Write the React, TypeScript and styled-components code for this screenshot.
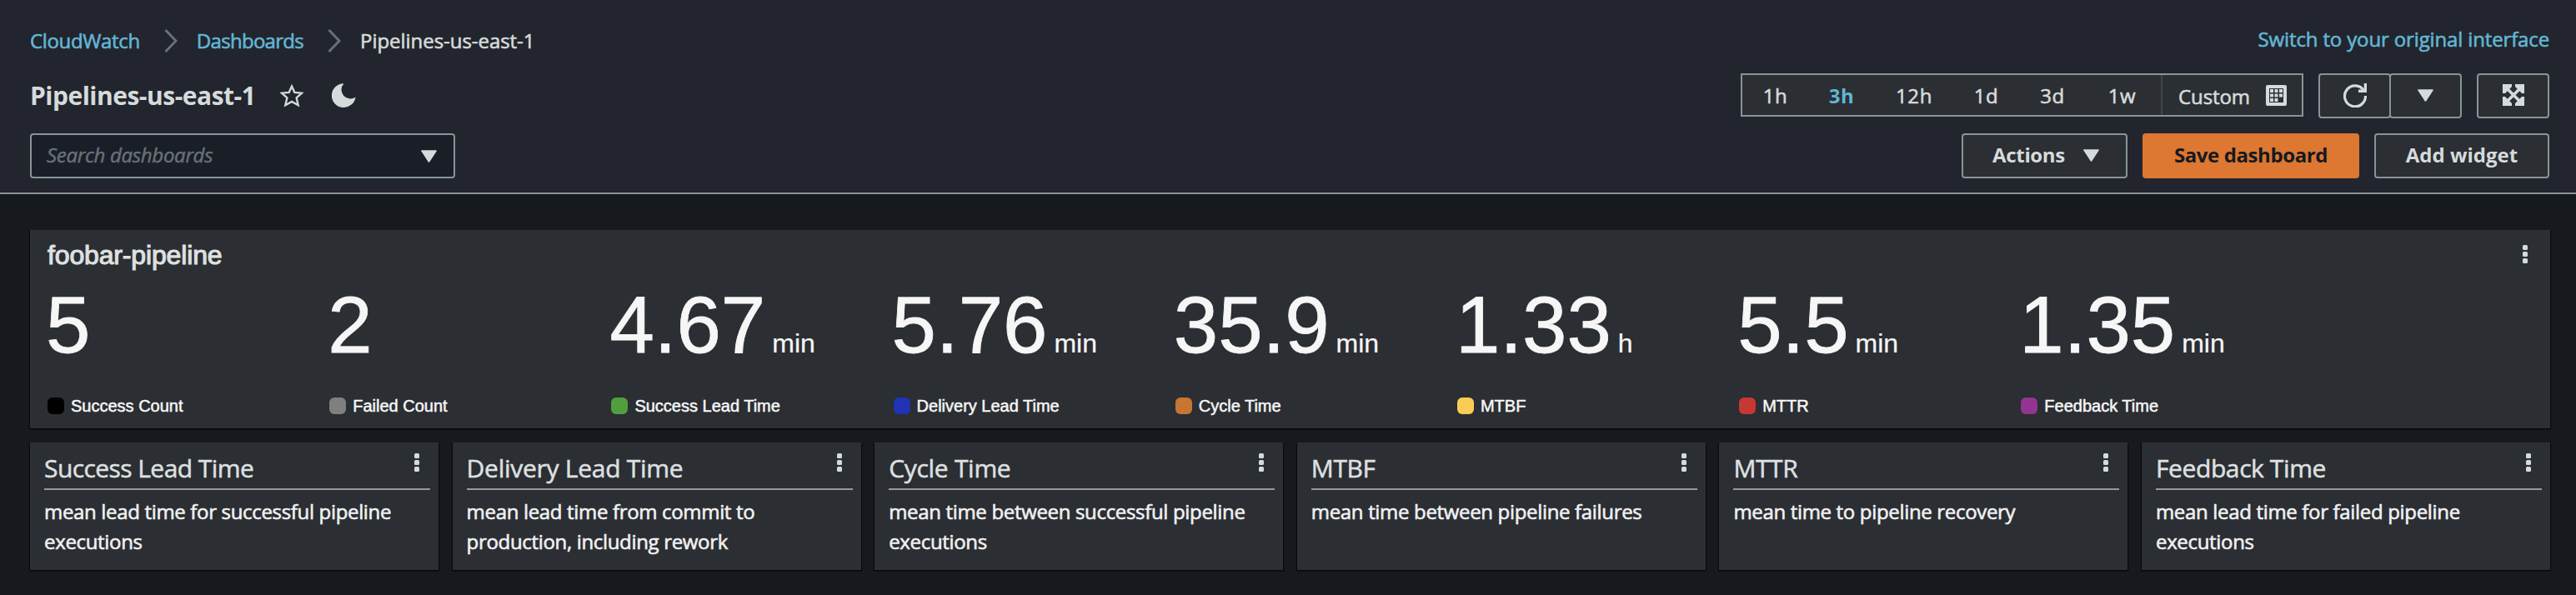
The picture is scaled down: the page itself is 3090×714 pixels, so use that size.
import React from 'react';
import styled, { createGlobalStyle } from 'styled-components';

const sans = `'Open Sans', 'Noto Sans', sans-serif`;
const helvetica = `'Liberation Sans', Arial, sans-serif`;

const color = {
  page: '#16191e',
  header: '#22252d',
  panel: '#2b2e33',
  field: '#1a1e27',
  border: '#879596',
  text: '#d5dbdb',
  link: '#62b5d5',
  muted: '#687078',
  accent: '#dd7731',
};

const GlobalStyle = createGlobalStyle`
  *, *::before, *::after { box-sizing: border-box; }
  body {
    margin: 0;
    background: ${color.page};
    color: ${color.text};
    font-family: ${sans};
    font-size: 24px;
  }
  h1, h2, p { margin: 0; }
  button { font: inherit; color: inherit; margin: 0; padding: 0; }
  svg { display: block; flex: none; }
`;

const Page = styled.div`
  min-height: 714px;
  background: ${color.page};
`;

const Header = styled.header`
  display: flex;
  justify-content: space-between;
  height: 233px;
  padding: 0 32px 0 36px;
  background: ${color.header};
  border-bottom: 2px solid ${color.border};
`;

const HeaderLeft = styled.div`
  padding-top: 31px;
`;

const HeaderRight = styled.div`
  display: flex;
  flex-direction: column;
  align-items: flex-end;
  padding-top: 29px;
`;

const Breadcrumbs = styled.nav`
  display: flex;
  align-items: center;
  height: 36px;
  line-height: 36px;
  white-space: nowrap;
  -webkit-text-stroke-width: 0.6px;
`;

const Crumb = styled.span<{ $link?: boolean; $spacing: number }>`
  color: ${(p) => (p.$link ? color.link : color.text)};
  letter-spacing: ${(p) => p.$spacing}px;
`;

const CrumbSeparator = styled.svg`
  margin: 0 23px 0 29px;
`;

const TitleRow = styled.div`
  display: flex;
  align-items: flex-start;
  height: 40px;
  margin-top: 28px;
`;

const Title = styled.h1`
  font-size: 30px;
  line-height: 40px;
  font-weight: 700;
  letter-spacing: -0.5px;
  width: 300px;
  white-space: nowrap;
`;

const IconSlot = styled.span<{ $width: number }>`
  width: ${(p) => p.$width}px;
  padding-top: 5px;
`;

const SearchBox = styled.div`
  display: flex;
  align-items: center;
  justify-content: space-between;
  width: 510px;
  height: 54px;
  margin-top: 25px;
  padding: 0 20px 0 18px;
  background: ${color.field};
  border: 2px solid ${color.border};
  border-radius: 4px;
  color: ${color.muted};
  font-style: italic;
  line-height: 48px;
  letter-spacing: -0.3px;
  -webkit-text-stroke-width: 0.5px;

  span { padding-bottom: 2px; }
`;

const SwitchLink = styled.a`
  color: ${color.link};
  line-height: 36px;
  letter-spacing: -0.14px;
  -webkit-text-stroke-width: 0.6px;
`;

const Toolbar = styled.div<{ $top: number }>`
  display: flex;
  align-items: flex-start;
  gap: 18px;
  height: 54px;
  margin-top: ${(p) => p.$top}px;
`;

const RangePicker = styled.div`
  display: flex;
  height: 52px;
  background: ${color.panel};
  border: 2px solid ${color.border};
`;

const RangeOption = styled.button<{ $width: number; $active?: boolean }>`
  width: ${(p) => p.$width}px;
  background: none;
  border: 0;
  line-height: 48px;
  padding-top: 1px;
  font-weight: ${(p) => (p.$active ? 700 : 400)};
  letter-spacing: 0.6px;
  color: ${(p) => (p.$active ? color.link : color.text)};
  -webkit-text-stroke-width: ${(p) => (p.$active ? 0 : 0.6)}px;

  &:nth-of-type(6) { padding-right: 3px; }
`;

const CustomRange = styled.button`
  display: flex;
  align-items: center;
  justify-content: space-between;
  width: 169px;
  padding: 0 18px 0 19px;
  background: none;
  border: 0;
  border-left: 2px solid #414750;
  line-height: 46px;
  letter-spacing: -0.1px;

  span {
    padding-top: 3px;
    -webkit-text-stroke-width: 0.6px;
  }
`;

const Button = styled.button<{ $width: number; $primary?: boolean; $spacing?: number }>`
  display: flex;
  align-items: center;
  justify-content: center;
  gap: 22px;
  width: ${(p) => p.$width}px;
  height: 54px;
  background: ${(p) => (p.$primary ? color.accent : color.panel)};
  border: 2px solid ${(p) => (p.$primary ? color.accent : color.border)};
  border-radius: 4px;
  color: ${(p) => (p.$primary ? '#16191f' : color.text)};
  font-weight: 700;
  letter-spacing: ${(p) => p.$spacing ?? 0}px;
  line-height: 46px;
  padding-bottom: 2px;
  white-space: nowrap;
`;

const ActionsButton = styled(Button)`
  padding-left: 3px;
`;

const ButtonGroup = styled.div`
  display: flex;

  ${Button} + ${Button} { margin-left: -2px; }
`;

const Board = styled.main`
  display: flex;
  flex-direction: column;
  gap: 17px;
  padding: 43px 31px 30px 36px;
`;

const Panel = styled.section`
  position: relative;
  background: ${color.panel};
  box-shadow: 0 1px 1px #050708, 1px 1px 1px rgba(0, 0, 0, 0.5), -1px 1px 1px rgba(0, 0, 0, 0.5);
`;

const MetricPanel = styled(Panel)`
  height: 238px;
  padding: 12px 21px 0;
`;

const PanelTitle = styled.h2`
  font-family: ${helvetica};
  font-size: 32px;
  font-weight: 400;
  line-height: 36px;
  letter-spacing: -0.15px;
  color: #dfe0e0;
  -webkit-text-stroke: 1.1px #dfe0e0;
`;

const Menu = styled.button<{ $top: number; $right: number }>`
  position: absolute;
  top: ${(p) => p.$top}px;
  right: ${(p) => p.$right}px;
  background: none;
  border: 0;
  line-height: 0;
`;

const Metrics = styled.div`
  display: flex;
  margin-top: 12px;
  font-family: ${helvetica};
  color: #f6f6f6;
`;

const Metric = styled.div`
  flex: 0 0 338.2px;
`;

const Value = styled.div`
  display: flex;
  align-items: baseline;
  gap: 8px;
  height: 108px;
  margin-left: -2px;
  font-size: 96px;
  line-height: 108px;
  -webkit-text-stroke-width: 0.8px;
`;

const Unit = styled.span`
  font-size: 32px;
  -webkit-text-stroke-width: 0.2px;
`;

const Legend = styled.div`
  display: flex;
  align-items: center;
  gap: 8px;
  margin-top: 33px;
  font-size: 20px;
  line-height: 20px;
  -webkit-text-stroke: 0.5px #f6f6f6;
`;

const Swatch = styled.span<{ $color: string }>`
  width: 20px;
  height: 20px;
  border-radius: 6px;
  background: ${(p) => p.$color};
`;

const Notes = styled.div`
  display: grid;
  grid-template-columns: repeat(6, 1fr);
  gap: 16.6px;
`;

const Note = styled(Panel)`
  height: 153px;
  padding: 11px 10px 0 17px;
`;

const NoteTitle = styled.h2<{ $spacing: number }>`
  height: 46px;
  border-bottom: 2px solid #9b9799;
  font-size: 30px;
  font-weight: 400;
  line-height: 40px;
  letter-spacing: ${(p) => p.$spacing}px;
  color: #dfe0e0;
  -webkit-text-stroke: 0.5px #dfe0e0;
`;

const NoteText = styled.p`
  margin-top: 8px;
  padding-right: 25px;
  line-height: 36px;
  letter-spacing: -0.33px;
  color: #f0f1f1;
  -webkit-text-stroke-width: 0.6px;
`;

const Caret = () => (
  <svg width="19" height="15" viewBox="0 0 19 15">
    <path d="M1 1h17L9.5 14z" fill={color.text} stroke={color.text} strokeWidth="1.6" strokeLinejoin="round" />
  </svg>
);

const Chevron = () => (
  <CrumbSeparator width="16" height="28" viewBox="0 0 16 28">
    <path d="M1.5 1 14 14 1.5 27" fill="none" stroke={color.muted} strokeWidth="3" />
  </CrumbSeparator>
);

const Kebab = () => (
  <svg width="6" height="22" viewBox="0 0 6 22" fill={color.text}>
    <rect width="6" height="6" rx="1.5" />
    <rect y="8" width="6" height="6" rx="1.5" />
    <rect y="16" width="6" height="6" rx="1.5" />
  </svg>
);

const Star = () => (
  <svg width="28" height="29" viewBox="0 0 28 29">
    <path
      d="M14 3.600L17.300 10.800 26 11.700 19.600 17.300 21.700 26.300 14 21.900 6.300 26.300 8.400 17.300 2 11.700 10.700 10.800Z"
      fill="none"
      stroke={color.text}
      strokeWidth="2.300"
    />
  </svg>
);

const Moon = () => (
  <svg width="29" height="29" viewBox="0 0 29 29">
    <path d="M14.500 0.200A14.400 14.400 0 1 0 28.500 16.500A10.800 10.800 0 0 1 14.500 0.200z" fill={color.text} />
  </svg>
);

const Calendar = () => (
  <svg width="25" height="25" viewBox="0 0 25 25">
    <rect x="2" y="2" width="21" height="21" fill="none" stroke={color.text} strokeWidth="4" strokeLinejoin="round" />
    <g fill={color.text}>
      {[5, 10.5, 16].map((y) =>
        [5, 10.5, 16].map((x) =>
          x === 16 && y === 16 ? null : <rect key={`${x}-${y}`} x={x} y={y} width="4" height="4" />
        )
      )}
    </g>
  </svg>
);

const Refresh = () => (
  <svg width="28" height="29" viewBox="0 0 28 29">
    <path d="M24.500 8.600A12.500 12.500 0 1 0 26.500 15" fill="none" stroke={color.text} strokeWidth="3.200" />
    <path d="M24.700 0h3.300v11H18V7.500h6.700z" fill={color.text} />
  </svg>
);

const Expand = () => (
  <svg width="26" height="26" viewBox="0 0 26 26">
    <path d="M4 4l18 18M22 4L4 22" stroke={color.text} strokeWidth="3.600" />
    <path
      d="M0 0h11v3L3 11H0zM26 0v11h-3L15 3V0zM0 26V15h3l8 8v3zM26 26H15v-3l8-8h3z"
      fill={color.text}
    />
  </svg>
);

const ranges: { label: string; width: number; active?: boolean }[] = [
  { label: '1h', width: 79 },
  { label: '3h', width: 80, active: true },
  { label: '12h', width: 94 },
  { label: '1d', width: 79 },
  { label: '3d', width: 80 },
  { label: '1w', width: 90 },
];

const metrics: { value: string; unit?: string; label: string; color: string }[] = [
  { value: '5', label: 'Success Count', color: '#000000' },
  { value: '2', label: 'Failed Count', color: '#7f7f7f' },
  { value: '4.67', unit: 'min', label: 'Success Lead Time', color: '#529e3f' },
  { value: '5.76', unit: 'min', label: 'Delivery Lead Time', color: '#1f33b4' },
  { value: '35.9', unit: 'min', label: 'Cycle Time', color: '#c77532' },
  { value: '1.33', unit: 'h', label: 'MTBF', color: '#f9cd55' },
  { value: '5.5', unit: 'min', label: 'MTTR', color: '#c63833' },
  { value: '1.35', unit: 'min', label: 'Feedback Time', color: '#933493' },
];

const notes = [
  { title: 'Success Lead Time', text: 'mean lead time for successful pipeline executions', spacing: -0.57 },
  { title: 'Delivery Lead Time', text: 'mean lead time from commit to production, including rework', spacing: -0.27 },
  { title: 'Cycle Time', text: 'mean time between successful pipeline executions', spacing: -0.3 },
  { title: 'MTBF', text: 'mean time between pipeline failures', spacing: -0.4 },
  { title: 'MTTR', text: 'mean time to pipeline recovery', spacing: -0.4 },
  { title: 'Feedback Time', text: 'mean lead time for failed pipeline executions', spacing: -0.4 },
];

export default function App() {
  return (
    <Page>
      <GlobalStyle />
      <Header>
        <HeaderLeft>
          <Breadcrumbs>
            <Crumb $link $spacing={-0.35}>CloudWatch</Crumb>
            <Chevron />
            <Crumb $link $spacing={-0.7}>Dashboards</Crumb>
            <Chevron />
            <Crumb $spacing={-0.05}>Pipelines-us-east-1</Crumb>
          </Breadcrumbs>
          <TitleRow>
            <Title>Pipelines-us-east-1</Title>
            <IconSlot $width={62}><Star /></IconSlot>
            <IconSlot $width={29}><Moon /></IconSlot>
          </TitleRow>
          <SearchBox>
            <span>Search dashboards</span>
            <Caret />
          </SearchBox>
        </HeaderLeft>
        <HeaderRight>
          <SwitchLink>Switch to your original interface</SwitchLink>
          <Toolbar $top={23}>
            <RangePicker>
              {ranges.map((r) => (
                <RangeOption key={r.label} $width={r.width} $active={r.active}>{r.label}</RangeOption>
              ))}
              <CustomRange>
                <span>Custom</span>
                <Calendar />
              </CustomRange>
            </RangePicker>
            <ButtonGroup>
              <Button $width={87} aria-label="Refresh"><Refresh /></Button>
              <Button $width={87} aria-label="Refresh options"><Caret /></Button>
            </ButtonGroup>
            <Button $width={87} aria-label="Full screen"><Expand /></Button>
          </Toolbar>
          <Toolbar $top={18}>
            <ActionsButton $width={199} $spacing={-0.35}>Actions<Caret /></ActionsButton>
            <Button $width={260} $primary $spacing={-0.4}>Save dashboard</Button>
            <Button $width={210}>Add widget</Button>
          </Toolbar>
        </HeaderRight>
      </Header>
      <Board>
        <MetricPanel>
          <PanelTitle>foobar-pipeline</PanelTitle>
          <Menu $top={18} $right={27} aria-label="Widget actions"><Kebab /></Menu>
          <Metrics>
            {metrics.map((m) => (
              <Metric key={m.label}>
                <Value>
                  {m.value}
                  {m.unit && <Unit>{m.unit}</Unit>}
                </Value>
                <Legend>
                  <Swatch $color={m.color} />
                  {m.label}
                </Legend>
              </Metric>
            ))}
          </Metrics>
        </MetricPanel>
        <Notes>
          {notes.map((n) => (
            <Note key={n.title}>
              <NoteTitle $spacing={n.spacing}>{n.title}</NoteTitle>
              <Menu $top={13} $right={23} aria-label="Widget actions"><Kebab /></Menu>
              <NoteText>{n.text}</NoteText>
            </Note>
          ))}
        </Notes>
      </Board>
    </Page>
  );
}
